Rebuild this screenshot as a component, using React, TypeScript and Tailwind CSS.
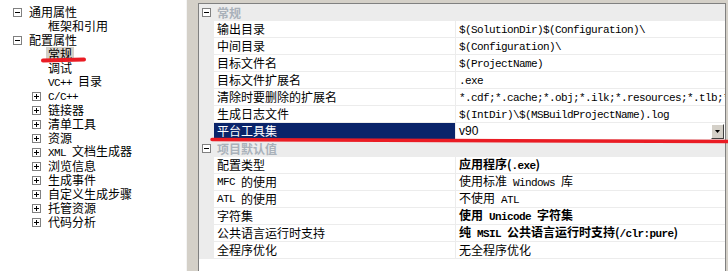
import React from "react";

const M = ({ children }: { children: React.ReactNode }) => (
  <span className="font-['Liberation_Mono'] text-[11px] tracking-[-0.6px] whitespace-pre">{children}</span>
);

const Box = ({ plus }: { plus?: boolean }) => (
  <svg width="9" height="9" viewBox="0 0 9 9" className="shrink-0">
    <rect x="0.5" y="0.5" width="8" height="8" fill="#fff" stroke="#808080" />
    <line x1="2" y1="4.5" x2="7" y2="4.5" stroke="#000" />
    {plus && <line x1="4.5" y1="2" x2="4.5" y2="7" stroke="#000" />}
  </svg>
);

type TreeItem = { label: React.ReactNode; level: 0 | 1; box?: "plus" | "minus"; sel?: boolean };

const tree: TreeItem[] = [
  { label: "通用属性", level: 0, box: "minus" },
  { label: "框架和引用", level: 1 },
  { label: "配置属性", level: 0, box: "minus" },
  { label: "常规", level: 1, sel: true },
  { label: "调试", level: 1 },
  { label: <><M>{"VC++ "}</M>目录</>, level: 1 },
  { label: <M>C/C++</M>, level: 1, box: "plus" },
  { label: "链接器", level: 1, box: "plus" },
  { label: "清单工具", level: 1, box: "plus" },
  { label: "资源", level: 1, box: "plus" },
  { label: <><M>{"XML "}</M>文档生成器</>, level: 1, box: "plus" },
  { label: "浏览信息", level: 1, box: "plus" },
  { label: "生成事件", level: 1, box: "plus" },
  { label: "自定义生成步骤", level: 1, box: "plus" },
  { label: "托管资源", level: 1, box: "plus" },
  { label: "代码分析", level: 1, box: "plus" },
];

type Row =
  | { kind: "cat"; label: string }
  | { kind: "prop"; name: React.ReactNode; value: React.ReactNode; bold?: boolean; sel?: boolean };

const rows: Row[] = [
  { kind: "cat", label: "常规" },
  { kind: "prop", name: "输出目录", value: <M>{"$(SolutionDir)$(Configuration)\\"}</M> },
  { kind: "prop", name: "中间目录", value: <M>{"$(Configuration)\\"}</M> },
  { kind: "prop", name: "目标文件名", value: <M>$(ProjectName)</M> },
  { kind: "prop", name: "目标文件扩展名", value: <M>.exe</M> },
  {
    kind: "prop",
    name: "清除时要删除的扩展名",
    value: <M>*.cdf;*.cache;*.obj;*.ilk;*.resources;*.tlb;*.tli;*.tlh;*.tmp;*.rsp;*.pgc;*.pgd</M>,
  },
  { kind: "prop", name: "生成日志文件", value: <M>{"$(IntDir)\\$(MSBuildProjectName).log"}</M> },
  { kind: "prop", name: "平台工具集", value: "v90", sel: true },
  { kind: "cat", label: "项目默认值" },
  { kind: "prop", name: "配置类型", value: <>应用程序(<M>.exe</M>)</>, bold: true },
  { kind: "prop", name: <><M>{"MFC "}</M>的使用</>, value: <>使用标准<M>{" Windows "}</M>库</> },
  { kind: "prop", name: <><M>{"ATL "}</M>的使用</>, value: <>不使用<M>{" ATL"}</M></> },
  { kind: "prop", name: "字符集", value: <>使用<M>{" Unicode "}</M>字符集</>, bold: true },
  {
    kind: "prop",
    name: "公共语言运行时支持",
    value: <>纯<M>{" MSIL "}</M>公共语言运行时支持(<M>/clr:pure</M>)</>,
    bold: true,
  },
  { kind: "prop", name: "全程序优化", value: "无全程序优化" },
];

export default function App() {
  return (
    <div className="relative w-[728px] h-[271px] overflow-hidden bg-[#d4d0c8] flex font-['Noto_Sans_CJK_SC',sans-serif] text-[12px] leading-[14px] text-black">
      {/* Left tree */}
      <div className="w-[187px] h-full bg-white border-r border-[#f4f4f4] pt-[5px] shrink-0">
        {tree.map((t, i) => (
          <div key={i} className="h-[14px] flex items-center whitespace-nowrap">
            {t.level === 0 ? (
              <div className="flex items-center pl-[13px]">
                <Box plus={t.box === "plus"} />
                <span className="ml-[5px] px-[2px]">{t.label}</span>
              </div>
            ) : (
              <div className="flex items-center">
                {t.box ? (
                  <div className="pl-[32px] flex items-center">
                    <Box plus />
                    <span className="ml-[5px] px-[2px]">{t.label}</span>
                  </div>
                ) : (
                  <span className={`ml-[46px] px-[2px] ${t.sel ? "bg-[#d4d0c8]" : ""}`}>{t.label}</span>
                )}
              </div>
            )}
          </div>
        ))}
      </div>

      {/* Gap */}
      <div className="w-[11px] shrink-0" />

      {/* Property grid */}
      <div className="w-[528px] mt-[3px] h-[268px] bg-white border-l border-t border-r border-[#808080] shrink-0 flex flex-col overflow-hidden">
        {rows.map((r, i) =>
          r.kind === "cat" ? (
            <div key={i} className="h-[17px] shrink-0 bg-[#ececec] flex items-center pl-[3px]">
              <Box />
              <span className="ml-[6px] font-bold text-[#a9b1ba]">{r.label}</span>
            </div>
          ) : (
            <div key={i} className="h-[17px] shrink-0 flex">
              <div className="w-[15px] bg-[#ececec] shrink-0" />
              <div
                className={`w-[242px] shrink-0 border-r border-b border-[#ececec] pl-[3px] flex items-center whitespace-nowrap ${
                  r.sel ? "bg-[#0a246a] text-white border-b-[#0a246a]" : ""
                }`}
              >
                {r.name}
              </div>
              <div className="flex-1 min-w-0 border-b border-[#ececec] pl-[3px] flex items-center whitespace-nowrap">
                {r.sel ? (
                  <div className="flex-1 flex items-center justify-between pr-[1px]">
                    <span className="font-['Liberation_Sans'] text-[12px]">{r.value}</span>
                    <div className="w-[13px] h-[15px] bg-[#d4d0c8] border border-t-white border-l-white border-r-[#404040] border-b-[#404040] flex items-center justify-center">
                      <svg width="5" height="3" viewBox="0 0 5 3">
                        <polygon points="0,0 5,0 2.5,3" fill="#000" />
                      </svg>
                    </div>
                  </div>
                ) : (
                  <span className={r.bold ? "font-bold" : ""}>{r.value}</span>
                )}
              </div>
            </div>
          )
        )}
        <div className="flex-1 bg-white" />
      </div>

      {/* Red annotation marks */}
      <svg className="absolute inset-0 pointer-events-none" width="728" height="271">
        <line x1="43" y1="60.5" x2="84" y2="59.5" stroke="#ea1c24" strokeWidth="4" strokeLinecap="round" />
        <line x1="212" y1="139.5" x2="728" y2="141.5" stroke="#ea1c24" strokeWidth="3.5" strokeLinecap="round" />
      </svg>
    </div>
  );
}
